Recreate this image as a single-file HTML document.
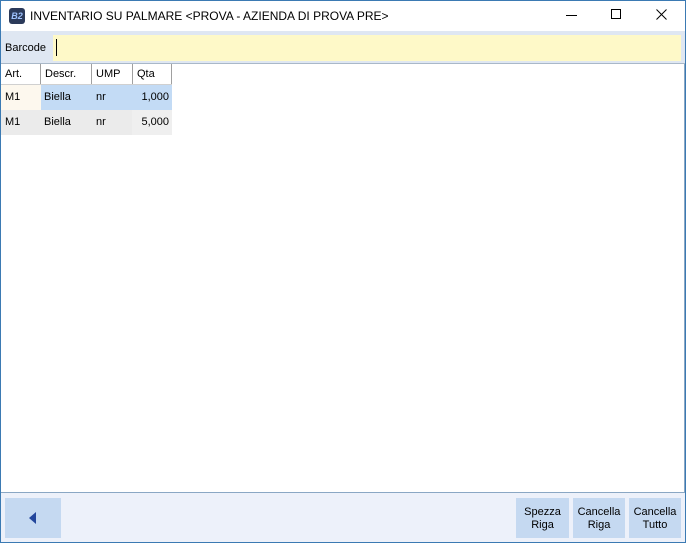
<!DOCTYPE html>
<html><head><style>
*{margin:0;padding:0;box-sizing:border-box}
body{width:686px;height:543px;overflow:hidden;background:#fff;font-family:"Liberation Sans",sans-serif;font-size:11px;color:#000;position:relative}
.win{position:absolute;left:0;top:0;width:686px;height:543px;border:1px solid #3b7ab3}
.abs{position:absolute}
.cell{position:absolute;height:100%;padding-left:4px;line-height:21px}
</style></head><body>
<div class="win"></div>
<div class="abs" style="left:9px;top:8px;width:16px;height:16px;background:#2b3a5a;border-radius:3px;color:#9fc3ff;font-size:9px;font-style:italic;line-height:16px;text-align:center;font-weight:bold">B2</div>
<div class="abs" style="left:30px;top:8px;font-size:12px;line-height:16px">INVENTARIO SU PALMARE &lt;PROVA - AZIENDA DI PROVA PRE&gt;</div>
<div class="abs" style="left:566px;top:15px;width:11px;height:1px;background:#000"></div>
<div class="abs" style="left:611px;top:9px;width:10px;height:10px;border:1px solid #000"></div>
<svg class="abs" style="left:656px;top:9px" width="11" height="11"><path d="M0.5 0.5L10.5 10.5M10.5 0.5L0.5 10.5" stroke="#000" stroke-width="1"/></svg>
<div class="abs" style="left:1px;top:31px;width:684px;height:32px;background:#dfe7f2"></div>
<div class="abs" style="left:5px;top:42px;font-size:11px">Barcode</div>
<div class="abs" style="left:53px;top:35px;width:628px;height:26px;background:#fef9c8"></div>
<div class="abs" style="left:56px;top:39px;width:1px;height:17px;background:#000"></div>
<div class="abs" style="left:1px;top:63px;width:684px;height:1px;background:#a9b8c8"></div>
<div class="abs" style="left:1px;top:64px;width:171px;height:21px;border-bottom:1px solid #d0d0d0">
 <div class="cell" style="left:0;width:40px;border-right:1px solid #a0a0a0">Art.</div>
 <div class="cell" style="left:40px;width:51px;border-right:1px solid #a0a0a0">Descr.</div>
 <div class="cell" style="left:91px;width:41px;border-right:1px solid #a0a0a0">UMP</div>
 <div class="cell" style="left:132px;width:39px;border-right:1px solid #a0a0a0">Qta</div>
</div>
<div class="abs" style="left:1px;top:85px;width:171px;height:25px;line-height:25px">
 <div class="abs" style="left:0;top:0;width:40px;height:25px;background:#fdf8ee;padding-left:4px">M1</div>
 <div class="abs" style="left:40px;top:0;width:131px;height:25px;background:#c3dbf5"></div>
 <div class="abs" style="left:43px;top:0">Biella</div>
 <div class="abs" style="left:95px;top:0">nr</div>
 <div class="abs" style="left:132px;top:0;width:36px;text-align:right">1,000</div>
</div>
<div class="abs" style="left:1px;top:110px;width:171px;height:25px;line-height:25px;background:#efefef">
 <div class="abs" style="left:0;top:0;width:131px;height:25px;background:#ebebeb"></div>
 <div class="abs" style="left:4px;top:0">M1</div>
 <div class="abs" style="left:43px;top:0">Biella</div>
 <div class="abs" style="left:95px;top:0">nr</div>
 <div class="abs" style="left:132px;top:0;width:36px;text-align:right">5,000</div>
</div>
<div class="abs" style="left:1px;top:64px;width:684px;height:429px;border-right:1px solid #8aa7c4"></div>
<div class="abs" style="left:1px;top:492px;width:684px;height:1px;background:#8aa7c4"></div>
<div class="abs" style="left:1px;top:493px;width:684px;height:49px;background:#edf1fa"></div>
<div class="abs" style="left:5px;top:498px;width:56px;height:40px;background:#c5d9f1"></div>
<svg class="abs" style="left:29px;top:512px" width="8" height="12"><path d="M0 6L7 0V12Z" fill="#23469c"/></svg>
<div class="abs" style="left:516px;top:498px;width:53px;height:40px;background:#c5d9f1;text-align:center;padding-top:8px;line-height:13px">Spezza<br>Riga</div>
<div class="abs" style="left:573px;top:498px;width:52px;height:40px;background:#c5d9f1;text-align:center;padding-top:8px;line-height:13px">Cancella<br>Riga</div>
<div class="abs" style="left:629px;top:498px;width:52px;height:40px;background:#c5d9f1;text-align:center;padding-top:8px;line-height:13px">Cancella<br>Tutto</div>
</body></html>
